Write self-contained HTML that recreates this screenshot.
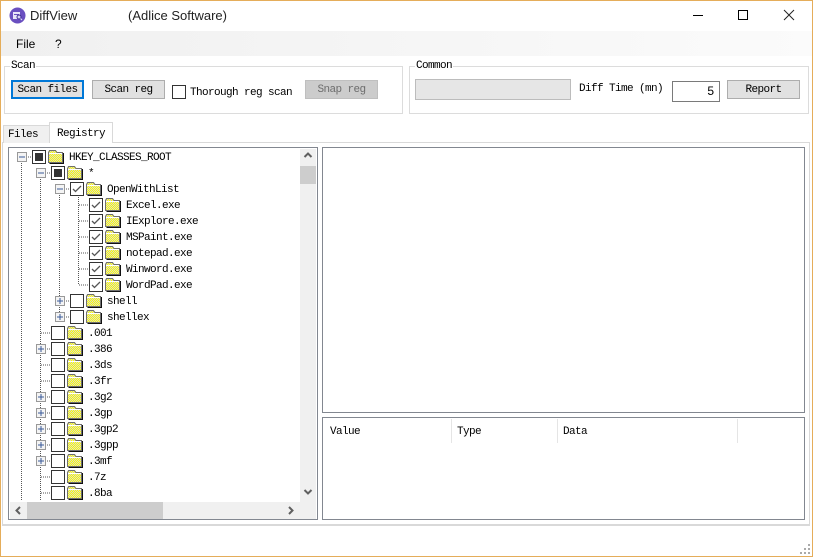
<!DOCTYPE html>
<html><head><meta charset="utf-8"><style>
html,body{margin:0;padding:0;background:#fff}
#w{position:relative;width:813px;height:557px;overflow:hidden;background:#fff}
#w div,#w span{position:absolute;box-sizing:border-box}
.t{font:11px/16px "Liberation Mono",monospace;letter-spacing:-.6px;color:#000;white-space:pre}
.u{font:12px/16px "Liberation Sans",sans-serif;color:#222;white-space:pre}
.h{font-size:13px}
.b{height:19px;width:73px;top:80px;background:#e1e1e1;border:1px solid #adadad;font:11px/18px "Liberation Mono",monospace;letter-spacing:-.6px;text-align:center;color:#000}
.g{border:1px solid #dcdcdc;top:66px;height:48px}
.l{background:#fff;padding:0 1px;top:59px;line-height:14px}
.p{left:322px;width:483px;border:1px solid #828790;background:#fff}
.s{width:1px;top:419px;height:24px;background:#e5e5e5}
.d{width:2px;height:2px;background:#aaa}
.r{margin-top:1px}
</style></head><body><div id="w">
<div style="left:0;top:31px;width:813px;height:25px;background:linear-gradient(90deg,#f0f0f0,#fbfbfb)"></div>
<svg style="position:absolute;left:9px;top:7px" width="17" height="17" viewBox="0 0 17 17"><circle cx="8.5" cy="8.5" r="8" fill="#6a4fc0"/><rect x="4" y="5" width="7" height="7" fill="#e8e4f8"/><rect x="5" y="7" width="5" height="1" fill="#6a4fc0"/><circle cx="10" cy="10" r="2" fill="#d8d0f4" stroke="#3a2a90"/><path d="M11.500 11.500L13 13" stroke="#e8e4f8"/></svg>
<span class="u h" style="left:30px;top:8px">DiffView</span>
<span class="u h" style="left:128px;top:8px">(Adlice Software)</span>
<span class="u" style="left:16px;top:36px;color:#000">File</span>
<span class="u" style="left:55px;top:36px;color:#000">?</span>
<svg style="position:absolute;left:690px;top:6px" width="110" height="20"><path d="M3 9.500H13" stroke="#000"/><rect x="48.500" y="4.500" width="9" height="9" fill="none" stroke="#000"/><path d="M94 4L104 14M104 4L94 14" stroke="#222"/></svg>

<div class="g" style="left:4px;width:399px"></div>
<span class="t l" style="left:10px">Scan</span>
<div class="g" style="left:409px;width:400px"></div>
<span class="t l" style="left:415px">Common</span>
<div class="b" style="left:11px;border:2px solid #0078d7;line-height:16px">Scan files</div>
<div class="b" style="left:92px">Scan reg</div>
<div style="left:172px;top:85px;width:14px;height:14px;border:1px solid #333;background:#fff"></div>
<span class="t" style="left:190px;top:85px">Thorough reg scan</span>
<div class="b" style="left:305px;background:#ccc;border-color:#bfbfbf;color:#6d6d6d">Snap reg</div>
<div style="left:415px;top:79px;width:156px;height:21px;background:#e6e6e6;border:1px solid #bcbcbc"></div>
<span class="t" style="left:579px;top:81px">Diff Time (mn)</span>
<div style="left:672px;top:81px;width:48px;height:21px;border:1px solid #7a7a7a;background:#fff;font:12px/19px 'Liberation Sans',sans-serif;text-align:right;padding-right:5px;color:#000">5</div>
<div class="b" style="left:727px">Report</div>

<div style="left:2px;top:142px;width:808px;height:384px;border:1px solid #d9d9d9;border-bottom-width:2px;background:#fff"></div>
<div style="left:3px;top:125px;width:47px;height:18px;background:#f0f0f0;border:1px solid #d9d9d9;border-bottom:0"></div>
<span class="t" style="left:8px;top:127px">Files</span>
<div style="left:49px;top:122px;width:64px;height:21px;background:#fff;border:1px solid #d9d9d9;border-bottom:0"></div>
<span class="t" style="left:57px;top:126px">Registry</span>

<div style="left:8px;top:147px;width:310px;height:373px;border:1px solid #828790;background:#fff"></div>
<div style="left:300px;top:149px;width:16px;height:353px;background:#f0f0f0"></div>
<div style="left:300px;top:166px;width:16px;height:18px;background:#cdcdcd"></div>
<div style="left:10px;top:502px;width:306px;height:17px;background:#f0f0f0"></div>
<div style="left:27px;top:502px;width:136px;height:17px;background:#cdcdcd"></div>

<div class="p" style="top:147px;height:266px"></div>
<div class="p" style="top:417px;height:103px"></div>
<span class="t" style="left:330px;top:424px">Value</span>
<span class="t" style="left:457px;top:424px">Type</span>
<span class="t" style="left:563px;top:424px">Data</span>
<div class="s" style="left:451px"></div><div class="s" style="left:557px"></div><div class="s" style="left:737px"></div>

<svg style="position:absolute;left:0;top:0" width="813" height="557" viewBox="0 0 813 557">
<defs>
<pattern id="y" width="2" height="2" patternUnits="userSpaceOnUse"><rect width="2" height="2" fill="#ffff00"/><rect x="1" width="1" height="1" fill="#d8d8d0"/><rect y="1" width="1" height="1" fill="#d8d8d0"/></pattern>
<g id="f"><path d="M.5 2.500L1.500 .5H7.500L9 2.500H14.500V12.500H.5Z" fill="url(#y)" stroke="#707070"/><path d="M1 3.500H14" stroke="#fff"/><path d="M15.500 3V13.500H1.500" fill="none" stroke="#111"/></g>
<g id="c"><rect x=".5" y=".5" width="13" height="13" fill="#fff" stroke="#333"/></g>
<g id="n"><use href="#c"/><path d="M3 7L5.500 9.500L11 4" fill="none" stroke="#555" stroke-width="1.300"/></g>
<g id="k"><use href="#c"/><rect x="3" y="3" width="8" height="8" fill="#333"/></g>
<g id="m"><rect x=".5" y=".5" width="9" height="9" fill="#f4f4f4" stroke="#999"/><path d="M2 5H8" stroke="#3a5a98"/></g>
<g id="a"><use href="#m"/><path d="M5 2V8" stroke="#3a5a98"/></g>
</defs>
<g fill="none" stroke="#555" stroke-dasharray="1 1">
<path d="M21.500 163V501M40.500 179V501M59.500 195V317M78.500 193V285"/>
<path d="M26 157H32M45 173H51M64 189H70M64 301H70M64 317H70"/>
<path d="M79 205H89M79 221H89M79 237H89M79 253H89M79 269H89M79 285H89"/>
<path d="M41 333H51M45 349H51M41 365H51M41 381H51M45 397H51M45 413H51M45 429H51M45 445H51M45 461H51M41 477H51M41 493H51"/>
</g>
<use href="#m" x="17" y="152"/><use href="#k" x="32" y="150"/><use href="#f" x="48" y="150"/>
<use href="#m" x="36" y="168"/><use href="#k" x="51" y="166"/><use href="#f" x="67" y="166"/>
<use href="#m" x="55" y="184"/><use href="#n" x="70" y="182"/><use href="#f" x="86" y="182"/>
<use href="#n" x="89" y="198"/><use href="#f" x="105" y="198"/>
<use href="#n" x="89" y="214"/><use href="#f" x="105" y="214"/>
<use href="#n" x="89" y="230"/><use href="#f" x="105" y="230"/>
<use href="#n" x="89" y="246"/><use href="#f" x="105" y="246"/>
<use href="#n" x="89" y="262"/><use href="#f" x="105" y="262"/>
<use href="#n" x="89" y="278"/><use href="#f" x="105" y="278"/>
<use href="#a" x="55" y="296"/><use href="#c" x="70" y="294"/><use href="#f" x="86" y="294"/>
<use href="#a" x="55" y="312"/><use href="#c" x="70" y="310"/><use href="#f" x="86" y="310"/>
<use href="#c" x="51" y="326"/><use href="#f" x="67" y="326"/>
<use href="#a" x="36" y="344"/><use href="#c" x="51" y="342"/><use href="#f" x="67" y="342"/>
<use href="#c" x="51" y="358"/><use href="#f" x="67" y="358"/>
<use href="#c" x="51" y="374"/><use href="#f" x="67" y="374"/>
<use href="#a" x="36" y="392"/><use href="#c" x="51" y="390"/><use href="#f" x="67" y="390"/>
<use href="#a" x="36" y="408"/><use href="#c" x="51" y="406"/><use href="#f" x="67" y="406"/>
<use href="#a" x="36" y="424"/><use href="#c" x="51" y="422"/><use href="#f" x="67" y="422"/>
<use href="#a" x="36" y="440"/><use href="#c" x="51" y="438"/><use href="#f" x="67" y="438"/>
<use href="#a" x="36" y="456"/><use href="#c" x="51" y="454"/><use href="#f" x="67" y="454"/>
<use href="#c" x="51" y="470"/><use href="#f" x="67" y="470"/>
<use href="#c" x="51" y="486"/><use href="#f" x="67" y="486"/>
<g fill="none" stroke="#606060" stroke-width="2">
<path d="M304.500 157L308 153.500L311.500 157M304.500 490L308 493.500L311.500 490M20 507L16.500 510.500L20 514M289 507L292.500 510.500L289 514"/>
</g>
</svg>

<span class="t r" style="left:69px;top:149px">HKEY_CLASSES_ROOT</span>
<span class="t r" style="left:88px;top:165px">*</span>
<span class="t r" style="left:107px;top:181px">OpenWithList</span>
<span class="t r" style="left:126px;top:197px">Excel.exe</span>
<span class="t r" style="left:126px;top:213px">IExplore.exe</span>
<span class="t r" style="left:126px;top:229px">MSPaint.exe</span>
<span class="t r" style="left:126px;top:245px">notepad.exe</span>
<span class="t r" style="left:126px;top:261px">Winword.exe</span>
<span class="t r" style="left:126px;top:277px">WordPad.exe</span>
<span class="t r" style="left:107px;top:293px">shell</span>
<span class="t r" style="left:107px;top:309px">shellex</span>
<span class="t r" style="left:88px;top:325px">.001</span>
<span class="t r" style="left:88px;top:341px">.386</span>
<span class="t r" style="left:88px;top:357px">.3ds</span>
<span class="t r" style="left:88px;top:373px">.3fr</span>
<span class="t r" style="left:88px;top:389px">.3g2</span>
<span class="t r" style="left:88px;top:405px">.3gp</span>
<span class="t r" style="left:88px;top:421px">.3gp2</span>
<span class="t r" style="left:88px;top:437px">.3gpp</span>
<span class="t r" style="left:88px;top:453px">.3mf</span>
<span class="t r" style="left:88px;top:469px">.7z</span>
<span class="t r" style="left:88px;top:485px">.8ba</span>

<div class="d" style="left:808px;top:544px"></div>
<div class="d" style="left:804px;top:548px"></div><div class="d" style="left:808px;top:548px"></div>
<div class="d" style="left:800px;top:552px"></div><div class="d" style="left:804px;top:552px"></div><div class="d" style="left:808px;top:552px"></div>
<div style="left:0;top:0;width:813px;height:557px;border:1px solid #e5ad5a"></div>
</div></body></html>
